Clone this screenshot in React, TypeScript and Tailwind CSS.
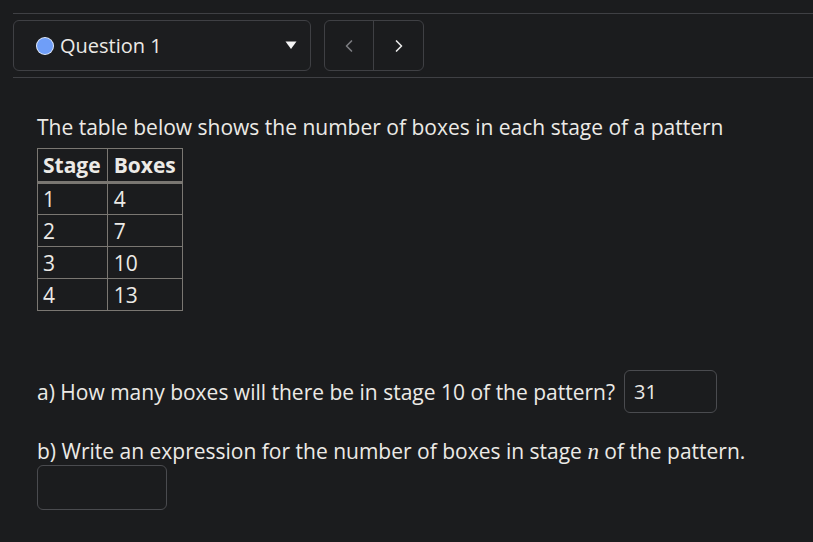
import { ChevronLeft, ChevronRight } from "lucide-react";

const rows = [
  ["1", "4"],
  ["2", "7"],
  ["3", "10"],
  ["4", "13"],
];

export default function App() {
  return (
    <div className="min-h-[542px] w-[813px] bg-[#1b1c1e] text-[#eceae6] font-['Open_Sans',sans-serif] overflow-hidden">
      <div className="pt-[13px] pl-[13px]">
        <div className="border-t border-[#3f4044]" />
        <div className="flex gap-[13px] py-[6px]">
          {/* question picker */}
          <div className="w-[298px] h-[51px] flex items-center rounded-md border border-[#3f4044] bg-[#1c1d1f] pl-[22px] pr-[12px]">
            <span className="w-[18px] h-[18px] rounded-full bg-[#6f9ef8] border border-white/80" />
            <span className="ml-[6px] text-[20px] flex-1">Question 1</span>
            <svg width="12" height="9" viewBox="0 0 12 9" className="mr-[1px]">
              <path d="M0.5 0.5h11L6 8z" fill="#f4f4f4" />
            </svg>
          </div>
          {/* prev/next */}
          <div className="flex h-[51px] rounded-md border border-[#3f4044] overflow-hidden">
            <button className="w-[49px] flex items-center justify-center text-[#7b7c80] border-r border-[#3f4044]">
              <ChevronLeft size={20} strokeWidth={2} />
            </button>
            <button className="w-[49px] flex items-center justify-center text-[#e8e8e8]">
              <ChevronRight size={20} strokeWidth={2} />
            </button>
          </div>
        </div>
        <div className="border-t border-[#3f4044]" />
      </div>

      <div className="pl-[37px] pt-[34px] text-[21px] leading-[30px]">
        <p>The table below shows the number of boxes in each stage of a pattern</p>
        <table className="mt-[6px] border-collapse text-[21px] leading-[30px]">
          <thead>
            <tr>
              <th className="border border-[#7a7772] border-b-[3px] pl-[5px] pr-[6px] h-[34px] text-left font-bold">Stage</th>
              <th className="border border-[#7a7772] border-b-[3px] pl-[6px] pr-[6px] h-[34px] text-left font-bold">Boxes</th>
            </tr>
          </thead>
          <tbody>
            {rows.map(([s, b]) => (
              <tr key={s}>
                <td className="border border-[#7a7772] pl-[5px] h-[32px] py-0">{s}</td>
                <td className="border border-[#7a7772] pl-[6px] h-[32px] py-0">{b}</td>
              </tr>
            ))}
          </tbody>
        </table>

        <div className="mt-[59px] flex items-center">
          <span>a) How many boxes will there be in stage 10 of the pattern?</span>
          <div className="ml-[9px] w-[93px] h-[43px] rounded-md border border-[#4a4b4f] flex items-center px-[9px] text-[20px]">
            31
          </div>
        </div>

        <p className="mt-[24px] leading-[28px]">
          b) Write an expression for the number of boxes in stage{" "}
          <span className="italic font-['Liberation_Serif',serif] text-[23px]">n</span> of the pattern.
        </p>
        <div className="mt-[-1px] w-[130px] h-[45px] rounded-md border border-[#4a4b4f]" />
      </div>
    </div>
  );
}
